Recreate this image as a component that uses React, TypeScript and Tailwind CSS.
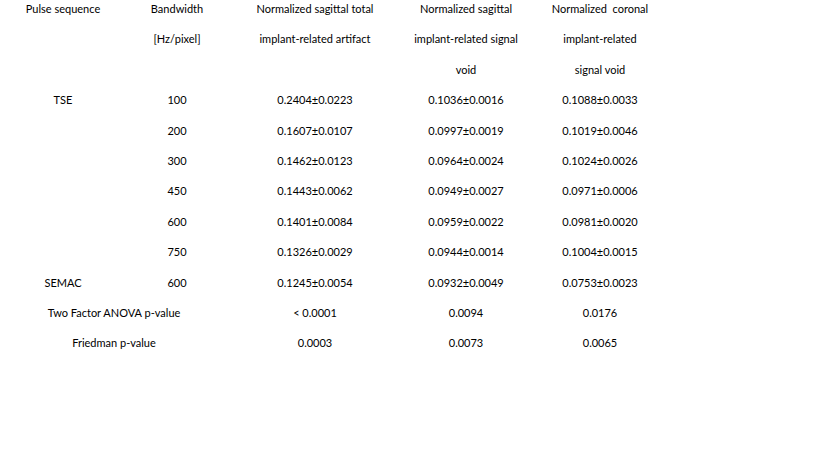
import React from "react";

const rows: [string, string, string, string, string][] = [
  ["TSE", "100", "0.2404±0.0223", "0.1036±0.0016", "0.1088±0.0033"],
  ["", "200", "0.1607±0.0107", "0.0997±0.0019", "0.1019±0.0046"],
  ["", "300", "0.1462±0.0123", "0.0964±0.0024", "0.1024±0.0026"],
  ["", "450", "0.1443±0.0062", "0.0949±0.0027", "0.0971±0.0006"],
  ["", "600", "0.1401±0.0084", "0.0959±0.0022", "0.0981±0.0020"],
  ["", "750", "0.1326±0.0029", "0.0944±0.0014", "0.1004±0.0015"],
  ["SEMAC", "600", "0.1245±0.0054", "0.0932±0.0049", "0.0753±0.0023"],
];

const Line = ({ children }: { children?: React.ReactNode }) => (
  <div className="h-[30.4px] leading-[16px] text-center whitespace-pre">{children}</div>
);

export default function App() {
  const headers: string[][] = [
    ["Pulse sequence"],
    ["Bandwidth", "[Hz/pixel]"],
    ["Normalized sagittal total", "implant-related artifact"],
    ["Normalized sagittal", "implant-related signal", "void"],
    ["Normalized  coronal", "implant-related", "signal void"],
  ];
  return (
    <div
      className="w-[819px] h-[460px] bg-white text-black text-[11px] overflow-hidden pt-[1px]"
      style={{ fontFamily: "Lato, 'Open Sans', sans-serif" }}
    >
      <div className="grid grid-cols-[126px_102px_174px_128px_140px]">
        {headers.map((h, i) => (
          <div key={i} className="h-[91.2px]">
            {h.map((l, j) => (
              <Line key={j}>{l}</Line>
            ))}
          </div>
        ))}
        {rows.map((r, i) => (
          <React.Fragment key={i}>
            {r.map((c, j) => (
              <Line key={j}>{c}</Line>
            ))}
          </React.Fragment>
        ))}
        <div className="col-span-2">
          <Line>Two Factor ANOVA p-value</Line>
        </div>
        <Line>{"< 0.0001"}</Line>
        <Line>0.0094</Line>
        <Line>0.0176</Line>
        <div className="col-span-2">
          <Line>Friedman p-value</Line>
        </div>
        <Line>0.0003</Line>
        <Line>0.0073</Line>
        <Line>0.0065</Line>
      </div>
    </div>
  );
}
